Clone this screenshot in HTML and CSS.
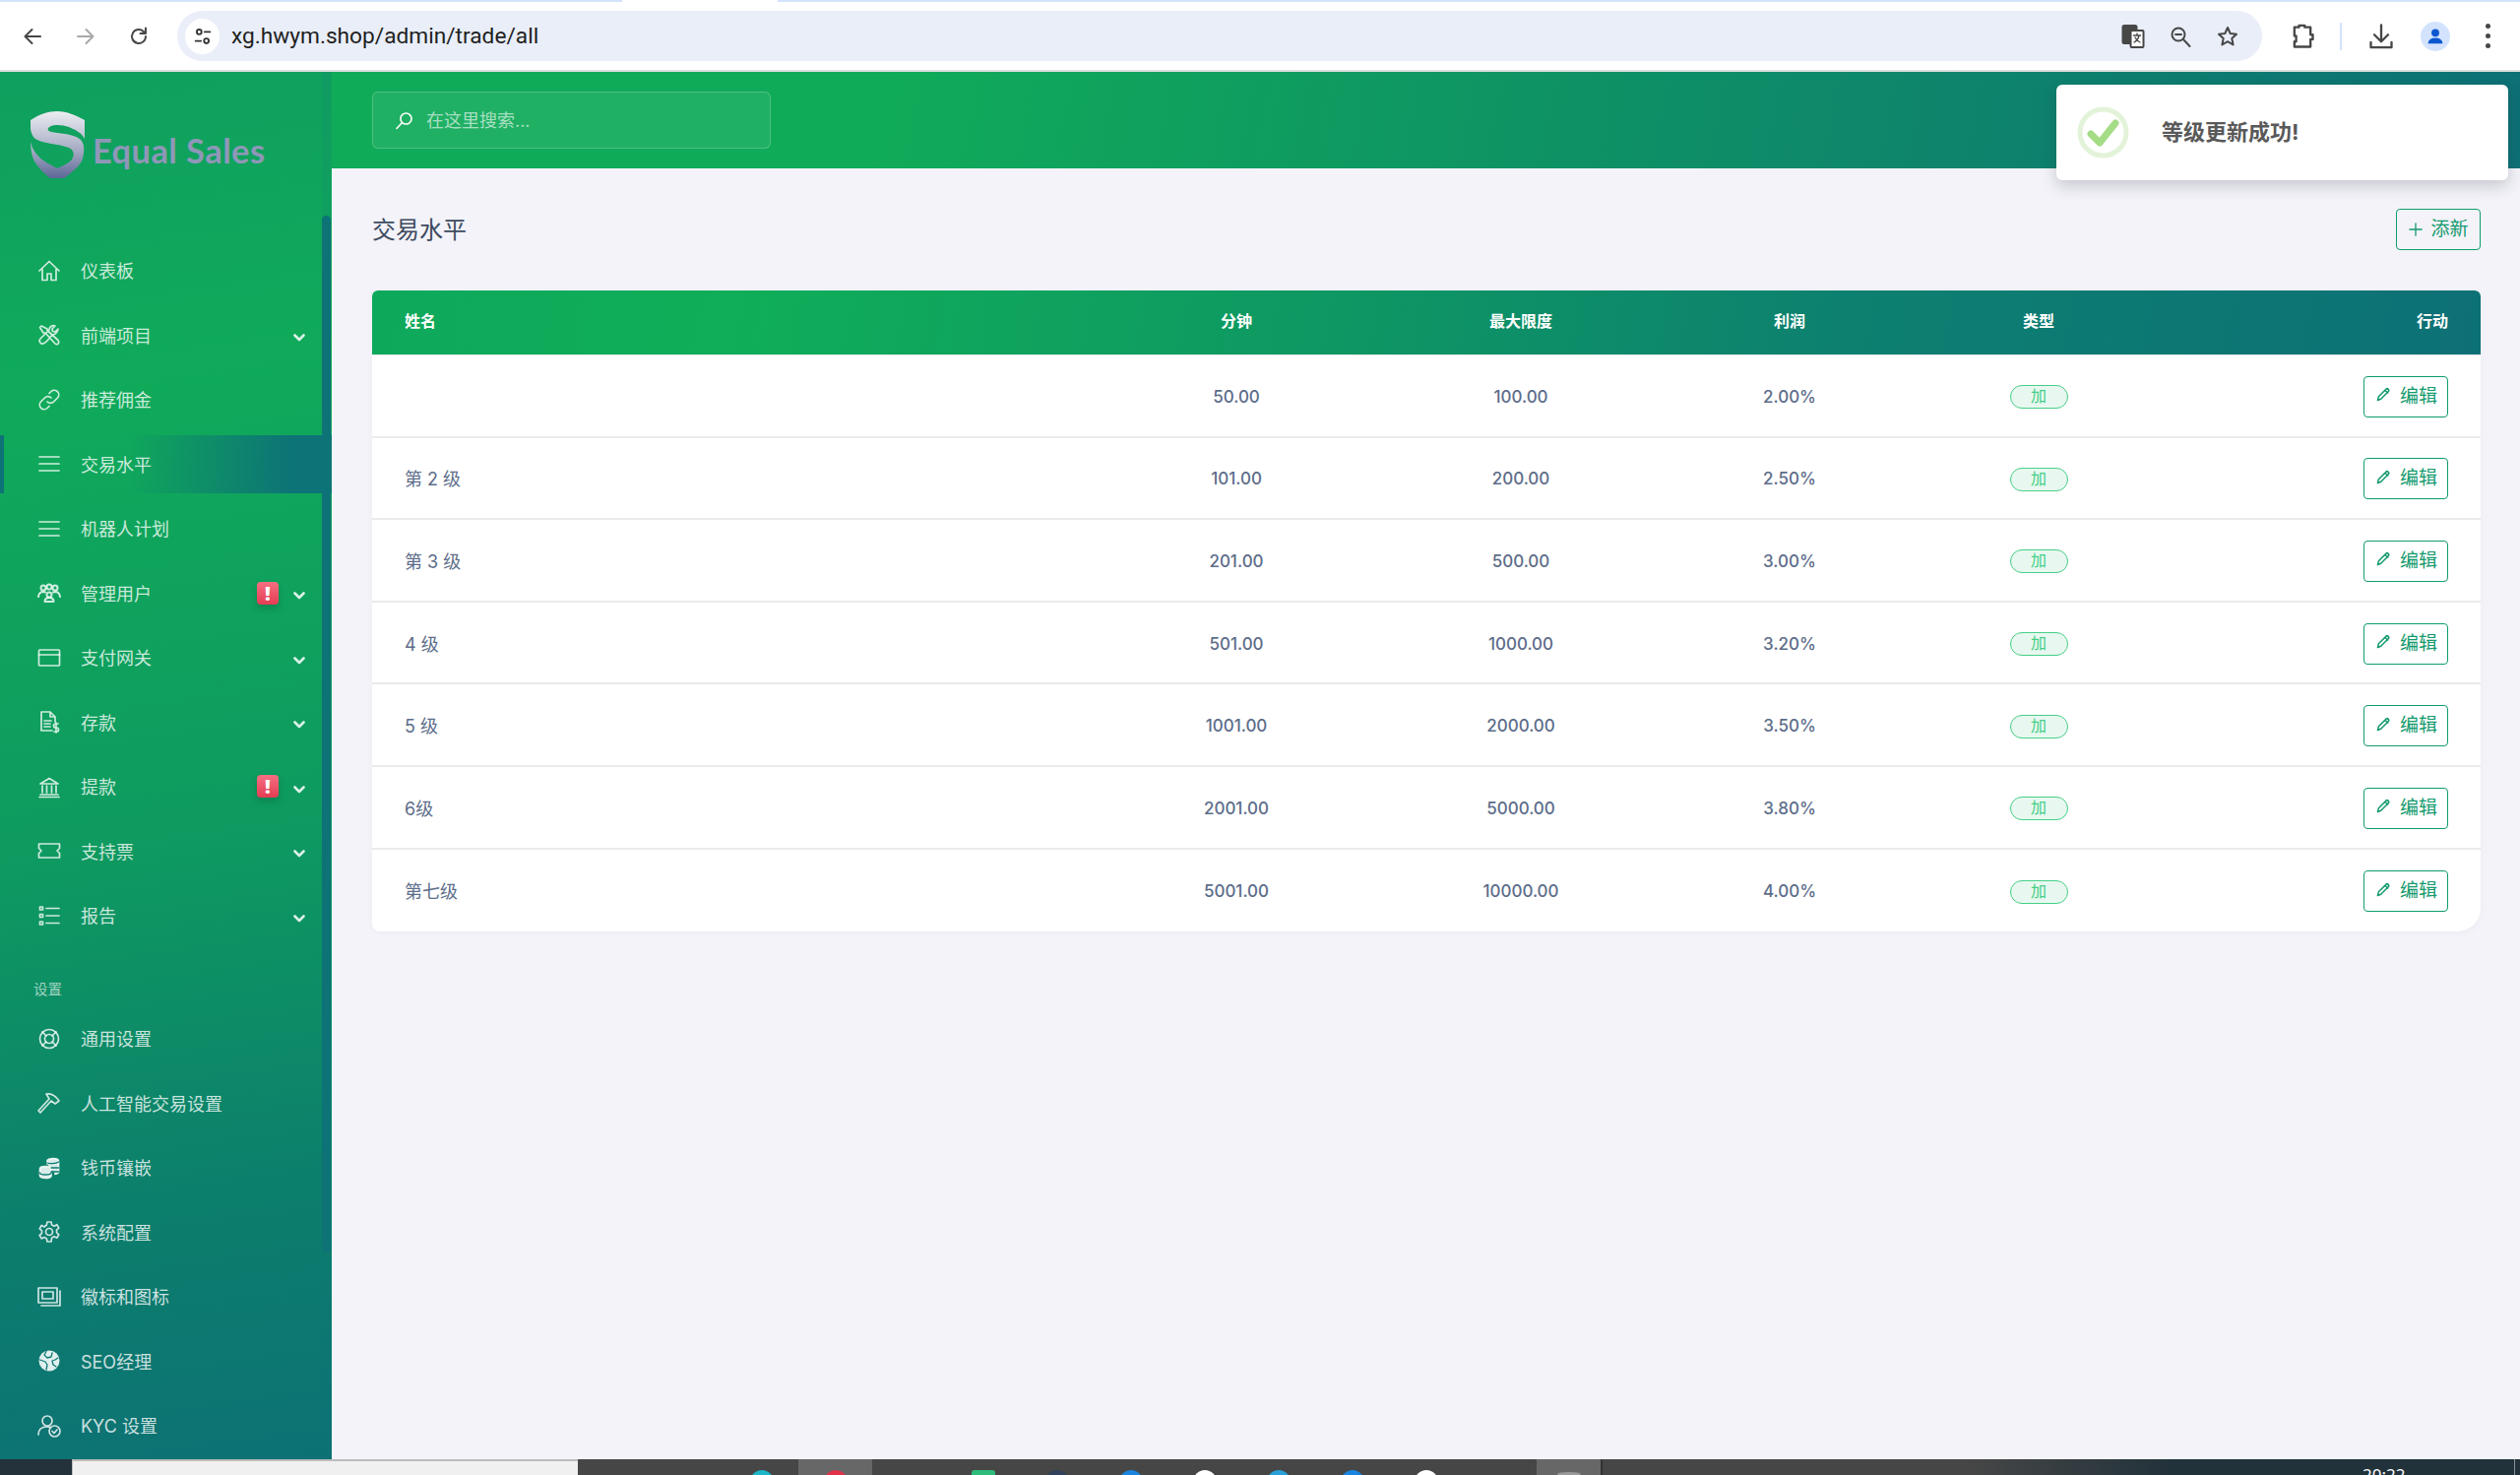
FILE: index.html
```html
<!DOCTYPE html>
<html lang="zh-CN">
<head>
<meta charset="utf-8">
<title>交易水平</title>
<link rel="stylesheet" href="styles.css">
</head>
<body>
<header class="browser">
  <div class="strip"><span class="strip-blue"></span><span class="strip-white"></span><span class="strip-rest"></span></div>
  <div class="toolbar">
    <svg class="tb-icon back" viewBox="0 0 24 24"><path d="M20 12H5M11.5 5 4.5 12l7 7"/></svg>
    <svg class="tb-icon forward" viewBox="0 0 24 24"><path d="M4 12h15M12.5 5l7 7-7 7"/></svg>
    <svg class="tb-icon reload" viewBox="0 0 24 24"><path d="M19 12a7 7 0 1 1-2.2-5.1L19 9M19 3.500V9h-5.500"/></svg>
    <div class="omnibox">
      <span class="site-chip"><svg viewBox="0 0 24 24"><circle cx="8" cy="7" r="2.600"/><path d="M14 7h6M4 17h6"/><circle cx="16" cy="17" r="2.600"/></svg></span>
      <span class="url">xg.hwym.shop/admin/trade/all</span>
      <span class="omni-icons">
        <svg class="tb-icon" viewBox="0 0 24 24"><rect class="solid" x="1.500" y="1" width="14" height="18" rx="1.500"/><rect x="9.500" y="6" width="13" height="17" rx="1" class="paper"/><path class="thin" d="M12.500 11h7M16 9v2M18 11c-.6 3-2.500 5.500-5 7M14 13c1 2 3 4 5 5"/></svg>
        <svg class="tb-icon" viewBox="0 0 24 24"><circle cx="10" cy="10" r="6.500"/><path d="M7 10h6M15 15l6.500 7"/></svg>
        <svg class="tb-icon" viewBox="0 0 24 24"><path d="m12 3 2.700 6 6.300.7-4.700 4.300 1.300 6.500L12 17.200 6.400 20.500 7.700 14 3 9.700 9.300 9z"/></svg>
      </span>
    </div>
    <svg class="tb-icon puzzle" viewBox="0 0 24 24"><path d="M9 4V2.500h5V4h5v6.500h2v4h-2V21H5v-4.500h1.500v-5H5V4z"/></svg>
    <span class="tb-sep"></span>
    <svg class="tb-icon download" viewBox="0 0 24 24"><path d="M12 2v14M6 10.500l6 6 6-6M3 17v4.500h18V17"/></svg>
    <span class="avatar"><svg viewBox="0 0 24 24"><circle cx="12" cy="8" r="4.300"/><path d="M4 20c0-4.500 3.500-6.500 8-6.500s8 2 8 6.500z"/></svg></span>
    <span class="dots"><i></i><i></i><i></i></span>
  </div>
</header>

<div class="app">
  <aside class="sidebar">
    <div class="logo">
      <svg class="logo-mark" viewBox="0 0 55 68">
        <defs>
          <linearGradient id="shield" x1="0" y1="0" x2="0" y2="1">
            <stop offset="0" stop-color="#eceef2"/>
            <stop offset=".55" stop-color="#a3a9c2"/>
            <stop offset="1" stop-color="#4f5a8e"/>
          </linearGradient>
        </defs>
        <path fill="url(#shield)" d="M0 9C9 3 18 0 27 0c10 0 19 4 28 9v19c-3-6-9-9-16-12-6-2-14-3-19-.5-3 1.500-3 4-.5 5 7 2 20 2 28 6 6 3 8 9 6 19l-1 4c-4 9-15 16-26 24C15 64 3 55 1 42c-.5-4-1-7-1-11 2 9 8 16 16 21l11 6c5-2 12-5 15-9 3-5 2-10-3-12-11-4-26-4-34-9C0 24-1 15 0 9z"/>
      </svg>
      <span class="logo-text">Equal Sales</span>
    </div>
    <nav class="menu">
      <a class="item"><svg viewBox="0 0 24 24"><path d="M2 12 12 2.500 22 12M5 10v11.500h5V15h4v6.500h5V10"/></svg><span>仪表板</span></a>
      <a class="item has-sub"><svg viewBox="0 0 24 24"><path d="M4 3 2.500 4.500 6 10l2 0 10 11c1 1 3 1 3.500-.5s.5-2-.5-3L10 7.500V6zM21 6l-3 3-2.500-.5L15 6l3-3c-3-1-6 1-6 4l-9 9c-2 2 0 6 3 5s9-9 9-9c3 0 6-3 6-6z"/></svg><span>前端项目</span><svg class="chev" viewBox="0 0 12 8"><path d="M1.500 1.500 6 6l4.500-4.500"/></svg></a>
      <a class="item"><svg viewBox="0 0 24 24"><path d="M10 14a4.500 4.500 0 0 0 6.500 0l4-4a4.600 4.600 0 0 0-6.500-6.500l-2 2M14 10a4.500 4.500 0 0 0-6.500 0l-4 4a4.600 4.600 0 0 0 6.500 6.500l2-2"/></svg><span>推荐佣金</span></a>
      <a class="item active"><svg viewBox="0 0 24 24"><path d="M2 5h20M2 12h20M2 19h20"/></svg><span>交易水平</span></a>
      <a class="item"><svg viewBox="0 0 24 24"><path d="M2 5h20M2 12h20M2 19h20"/></svg><span>机器人计划</span></a>
      <a class="item has-sub"><svg class="heavy" viewBox="0 0 24 24"><circle cx="6" cy="7" r="2.500"/><circle cx="18" cy="7" r="2.500"/><circle cx="12" cy="6" r="2.500"/><circle cx="12" cy="14" r="2.500"/><path d="M1 16c.5-3.500 2.500-5 5-5l2 .5M23 16c-.5-3.500-2.500-5-5-5l-2 .5M7.500 21c0-2.500 2-4 4.500-4s4.500 1.500 4.500 4z"/></svg><span>管理用户</span><b class="alert">!</b><svg class="chev" viewBox="0 0 12 8"><path d="M1.500 1.500 6 6l4.500-4.500"/></svg></a>
      <a class="item has-sub"><svg viewBox="0 0 24 24"><rect x="1.500" y="4" width="21" height="16" rx="1"/><path d="M1.500 9h21"/></svg><span>支付网关</span><svg class="chev" viewBox="0 0 12 8"><path d="M1.500 1.500 6 6l4.500-4.500"/></svg></a>
      <a class="item has-sub"><svg viewBox="0 0 24 24"><path d="M15 21H4V2h9l5 5v5M13 2v5h5M7 11h7M7 14h6M7 17h6M21 14h-2.500a1.500 1.500 0 0 0 0 4h1a1.500 1.500 0 0 1 0 4H17M19 13v10"/></svg><span>存款</span><svg class="chev" viewBox="0 0 12 8"><path d="M1.500 1.500 6 6l4.500-4.500"/></svg></a>
      <a class="item has-sub"><svg viewBox="0 0 24 24"><path d="M3 9 12 3.500 21 9zM5 11v7M9.500 11v7M14.500 11v7M19 11v7M3 20h18M2 22.500h20"/></svg><span>提款</span><b class="alert">!</b><svg class="chev" viewBox="0 0 12 8"><path d="M1.500 1.500 6 6l4.500-4.500"/></svg></a>
      <a class="item has-sub"><svg viewBox="0 0 24 24"><path d="M1.500 5h21v4.500l-2.500 2.500 2.500 2.500V19h-21v-4.500L4 12 1.500 9.500z"/></svg><span>支持票</span><svg class="chev" viewBox="0 0 12 8"><path d="M1.500 1.500 6 6l4.500-4.500"/></svg></a>
      <a class="item has-sub"><svg viewBox="0 0 24 24"><path d="M9 4.500h13M9 12h13M9 19.500h13M2.500 3h3v3h-3zM2.500 10.500h3v3h-3zM2.500 18h3v3h-3z"/></svg><span>报告</span><svg class="chev" viewBox="0 0 12 8"><path d="M1.500 1.500 6 6l4.500-4.500"/></svg></a>
      <div class="section">设置</div>
      <a class="item"><svg viewBox="0 0 24 24"><circle cx="12" cy="12" r="9.500"/><circle cx="12" cy="12" r="4.500"/><path d="m5 5 4 4M19 5l-4 4M5 19l4-4M19 19l-4-4"/></svg><span>通用设置</span></a>
      <a class="item"><svg viewBox="0 0 24 24"><path d="M9 3c5-1 9 1 13 7l-4 3-4-3-11 12-2-2L12 8 9 3z"/></svg><span>人工智能交易设置</span></a>
      <a class="item"><svg viewBox="0 0 24 24"><path class="soft" d="M10 8V5c0-1.500 2.500-2.500 6-2.500s5.500 1 5.500 2.500v11c0 1-1 2-3.500 2.500"/><path d="M2.500 13c0-1.500 2.500-2.500 5.500-2.500s6 1 6 2.500v7c0 1.500-3 2.500-6 2.500s-5.500-1-5.500-2.500z" class="soft"/><path class="cut" d="M10 7c2 1 9 1 11.500-1M14 12h7.500M14 16h7.500M2.500 17c0 1.500 2.500 2 5.500 2s6-.5 6-2"/></svg><span>钱币镶嵌</span></a>
      <a class="item"><svg viewBox="0 0 24 24"><circle cx="12" cy="12" r="3.500"/><path d="M10 2h4l.6 3 2.500 1.200 2.700-1.500 2 3.400-2.300 2 .1 2.800 2.200 1.900-2 3.400-2.800-1.400-2.400 1.400L14 22h-4l-.6-3.100-2.500-1.400-2.700 1.400-2-3.400 2.300-1.900v-2.800L2.200 8.900l2-3.400 2.700 1.500L9.400 5z"/></svg><span>系统配置</span></a>
      <a class="item"><svg viewBox="0 0 24 24"><rect x="1" y="3" width="19" height="15"/><rect x="5" y="7" width="11" height="7"/><path d="M23 6v15H4"/></svg><span>徽标和图标</span></a>
      <a class="item"><svg viewBox="0 0 24 24"><circle class="fill" cx="12" cy="12" r="10.500"/><path class="cut" d="M9 2.500 7 6l3 3 4-1 1-4M2.500 11 8 13l2 3-1 5M21 9l-3 2-3 1 1 4 3 2"/></svg><span>SEO经理</span></a>
      <a class="item"><svg viewBox="0 0 24 24"><circle cx="10" cy="7" r="5"/><path d="M1 21c0-5 3-8 9-8 1.500 0 2 .2 3 .5"/><circle cx="17.500" cy="17.500" r="5.500"/><path d="m15 17.500 2 2 3-3.500"/></svg><span>KYC 设置</span></a>
    </nav>
    <div class="scroll-track"><span class="scroll-thumb"></span></div>
  </aside>

  <main class="main">
    <div class="topbar">
      <label class="search">
        <svg viewBox="0 0 24 24"><circle cx="14.500" cy="9.500" r="7"/><path d="M9.500 14.500 2.500 22"/></svg>
        <span>在这里搜索...</span>
      </label>
    </div>
    <section class="content">
      <div class="page-head">
        <h1>交易水平</h1>
        <a class="btn add"><svg viewBox="0 0 16 16"><path d="M8 1v14M1 8h14"/></svg>添新</a>
      </div>
      <div class="table">
        <div class="row head"><span class="c-name">姓名</span><span>分钟</span><span>最大限度</span><span>利润</span><span>类型</span><span class="c-act">行动</span></div>
        <div class="row"><span class="c-name"></span><span>50.00</span><span>100.00</span><span>2.00%</span><span><em class="chip">加</em></span><span class="c-act"><a class="btn"><svg viewBox="0 0 16 16"><path d="M1.500 14.500 2.500 10.500 11 2c1-1 3.500 1.500 2.500 2.500L5 13zM9.500 3.500l3 3"/></svg>编辑</a></span></div>
        <div class="row"><span class="c-name">第 2 级</span><span>101.00</span><span>200.00</span><span>2.50%</span><span><em class="chip">加</em></span><span class="c-act"><a class="btn"><svg viewBox="0 0 16 16"><path d="M1.500 14.500 2.500 10.500 11 2c1-1 3.500 1.500 2.500 2.500L5 13zM9.500 3.500l3 3"/></svg>编辑</a></span></div>
        <div class="row"><span class="c-name">第 3 级</span><span>201.00</span><span>500.00</span><span>3.00%</span><span><em class="chip">加</em></span><span class="c-act"><a class="btn"><svg viewBox="0 0 16 16"><path d="M1.500 14.500 2.500 10.500 11 2c1-1 3.500 1.500 2.500 2.500L5 13zM9.500 3.500l3 3"/></svg>编辑</a></span></div>
        <div class="row"><span class="c-name">4 级</span><span>501.00</span><span>1000.00</span><span>3.20%</span><span><em class="chip">加</em></span><span class="c-act"><a class="btn"><svg viewBox="0 0 16 16"><path d="M1.500 14.500 2.500 10.500 11 2c1-1 3.500 1.500 2.500 2.500L5 13zM9.500 3.500l3 3"/></svg>编辑</a></span></div>
        <div class="row"><span class="c-name">5 级</span><span>1001.00</span><span>2000.00</span><span>3.50%</span><span><em class="chip">加</em></span><span class="c-act"><a class="btn"><svg viewBox="0 0 16 16"><path d="M1.500 14.500 2.500 10.500 11 2c1-1 3.500 1.500 2.500 2.500L5 13zM9.500 3.500l3 3"/></svg>编辑</a></span></div>
        <div class="row"><span class="c-name">6级</span><span>2001.00</span><span>5000.00</span><span>3.80%</span><span><em class="chip">加</em></span><span class="c-act"><a class="btn"><svg viewBox="0 0 16 16"><path d="M1.500 14.500 2.500 10.500 11 2c1-1 3.500 1.500 2.500 2.500L5 13zM9.500 3.500l3 3"/></svg>编辑</a></span></div>
        <div class="row last"><span class="c-name">第七级</span><span>5001.00</span><span>10000.00</span><span>4.00%</span><span><em class="chip">加</em></span><span class="c-act"><a class="btn"><svg viewBox="0 0 16 16"><path d="M1.500 14.500 2.500 10.500 11 2c1-1 3.500 1.500 2.500 2.500L5 13zM9.500 3.500l3 3"/></svg>编辑</a></span></div>
      </div>
    </section>
  </main>
</div>

<footer class="taskbar">
  <span class="tk-start"></span>
  <span class="tk-search"></span>
  <div class="tk-apps">
    <span class="tk-cell"><i class="dot teal"></i></span>
    <span class="tk-cell on"><i class="dot red"></i></span>
    <span class="tk-cell"></span>
    <span class="tk-cell"><i class="dot green"></i></span>
    <span class="tk-cell"><i class="dot navy"></i></span>
    <span class="tk-cell"><i class="dot blue"></i></span>
    <span class="tk-cell"><i class="dot white"></i></span>
    <span class="tk-cell"><i class="dot sky"></i></span>
    <span class="tk-cell"><i class="dot blue"></i></span>
    <span class="tk-cell"><i class="dot white"></i></span>
    <span class="tk-cell"></span>
    <span class="tk-cell on end"><i class="dot grey"></i></span>
  </div>
  <span class="tk-fill"></span>
  <time class="tk-time">20:22</time>
  <span class="tk-edge"></span>
</footer>

<div class="toast">
  <svg class="toast-icon" viewBox="0 0 53 53"><circle cx="26.500" cy="26.500" r="23.500"/><path d="m14 28 9 9 16-20"/></svg>
  <strong>等级更新成功!</strong>
</div>
</body>
</html>
```

FILE: styles.css
```css
* { box-sizing: border-box; }
html, body { margin: 0; height: 100%; }
body {
  width: 2560px;
  height: 1498px;
  display: flex;
  flex-direction: column;
  overflow: hidden;
  position: relative;
  background: #f3f3f9;
  font-family: Inter, "Noto Sans CJK SC", sans-serif;
  font-size: 18px;
}
svg { display: block; fill: none; stroke: currentColor; stroke-linecap: round; stroke-linejoin: round; }
a { text-decoration: none; color: inherit; }

/* browser chrome */
.browser { flex: 0 0 73px; background: #fff; border-bottom: 2px solid #dedede; display: flex; flex-direction: column; }
.strip { display: flex; height: 2px; flex: none; }
.strip-blue { width: 632px; background: #d3e3fd; }
.strip-white { width: 158px; background: #fff; }
.strip-rest { flex: 1; background: #d3e3fd; }
.toolbar { flex: 1; display: flex; align-items: center; padding-left: 21px; }
.tb-icon { width: 24px; height: 24px; color: #474747; stroke-width: 2; flex: none; }
.forward { margin-left: 30px; color: #a8a8a8; }
.reload { margin-left: 30px; }
.omnibox { margin-left: 27px; width: 2118px; height: 51px; border-radius: 26px; background: #e9eef8; display: flex; align-items: center; padding-left: 8px; }
.site-chip { width: 35px; height: 36px; border-radius: 50%; background: #fff; display: flex; align-items: center; justify-content: center; color: #333; }
.site-chip svg { width: 22px; height: 22px; stroke-width: 2; }
.url { margin-left: 12px; font-family: Roboto, sans-serif; font-size: 22.700px; color: #1f1f1f; }
.omni-icons { margin-left: auto; display: flex; gap: 24px; padding-right: 23px; }
.omni-icons .solid { fill: #474747; }
.omni-icons .paper { fill: #fff; }
.omni-icons .thin { stroke-width: 1.300; }
.puzzle { margin-left: 27px; width: 28px; height: 28px; }
.tb-sep { width: 2px; height: 28px; background: #d3e3fd; margin-left: 24px; }
.download { margin-left: 26px; width: 28px; height: 28px; }
.avatar { width: 30px; height: 30px; border-radius: 50%; background: #d3e3fd; color: #0b57d0; margin-left: 26px; display: flex; align-items: center; justify-content: center; }
.avatar svg { width: 22px; height: 22px; fill: #0b57d0; stroke: none; }
.dots { display: flex; flex-direction: column; gap: 5px; margin-left: 36px; }
.dots i { width: 5px; height: 5px; border-radius: 50%; background: #474747; }

/* layout */
.app { flex: 1; display: flex; min-height: 0; }
.sidebar {
  flex: 0 0 337px;
  position: relative;
  overflow: hidden;
  color: rgba(255, 255, 255, .78);
  background: linear-gradient(172deg, #0f9f5f 0, #10aa5a 22%, #0e9a60 55%, #0c7f6c 80%, #0d7174 100%);
}
.logo { height: 172px; padding: 40px 0 0 31px; display: flex; align-items: flex-start; }
.logo-mark { width: 55px; height: 68px; stroke: none; flex: none; }
.logo-text { margin: 18px 0 0 8px; font-family: Lato, sans-serif; font-size: 34.500px; font-weight: 700; line-height: 44px; color: #8f97b8; letter-spacing: .4px; white-space: nowrap; }
.menu { display: flex; flex-direction: column; gap: 6.500px; }
.item { height: 59px; display: flex; align-items: center; padding: 0 27px 0 38px; font-size: 18px; position: relative; }
.item > span { margin-top: -1px; }
.item > svg:first-child { width: 24px; height: 24px; stroke-width: 1.700; margin-right: 20px; flex: none; color: rgba(255, 255, 255, .8); }
.item svg.heavy { stroke-width: 2; }
.item svg .fill { fill: rgba(255, 255, 255, .88); stroke: none; }
.item svg .soft { fill: rgba(255, 255, 255, .85); stroke: rgba(255, 255, 255, .85); }
.item svg .cut { stroke: #0d7a74; stroke-width: 1.300; }
.item.active { border-left: 4px solid #0d7376; padding-left: 34px; background: linear-gradient(90deg, transparent 38%, #0d7376 88%); }
.chev { width: 12px; height: 8px; stroke-width: 2.600; margin-left: auto; margin-top: 6px; color: rgba(255, 255, 255, .85); flex: none; }
.alert + .chev { margin-left: 15px; }
.alert { margin-left: auto; width: 22px; height: 23px; border-radius: 4px; background: linear-gradient(180deg, #f46f82, #e53c53); color: #fff; font: 800 20px/23px "Open Sans", sans-serif; text-align: center; box-shadow: 0 4px 6px rgba(0, 60, 50, .25); }
.section { height: 53px; padding-top: 27px; line-height: 24px; font-size: 14.500px; padding-left: 34px; color: rgba(255, 255, 255, .6); }
.scroll-track { position: absolute; top: 0; bottom: 0; right: 1px; width: 9px; background: rgba(13, 112, 120, .12); }
.scroll-thumb { position: absolute; top: 146px; height: 1053px; left: 0; width: 9px; border-radius: 5px; background: #0d7376; }

.main { flex: 1; display: flex; flex-direction: column; min-width: 0; }
.topbar { flex: 0 0 98px; padding: 20px 0 0 41px; background: linear-gradient(100deg, #10ab59 0, #10ab59 25%, #0e8f66 60%, #0d7076 100%); }
.search { width: 405px; height: 58px; border-radius: 6px; border: 1px solid rgba(255, 255, 255, .2); background: rgba(255, 255, 255, .07); display: flex; align-items: center; padding-left: 22px; color: rgba(255, 255, 255, .62); }
.search svg { width: 19px; height: 19px; stroke-width: 2; margin-right: 13px; color: #fff; }
.search span { margin-top: -3px; }
.content { flex: 1; padding: 41px 40px 0 41px; }
.page-head { display: flex; justify-content: space-between; align-items: center; height: 42px; margin-bottom: 41px; }
h1 { margin: -3px 0 0; font-size: 24px; font-weight: 400; color: #3e4a5f; }

.btn { display: inline-flex; align-items: center; height: 42px; padding: 0 10px 0 12px; border: 1.500px solid #0f9d6a; border-radius: 4px; font-size: 19px; font-weight: 400; color: #149a6e; background: #fff; line-height: 36px; }
.btn svg { width: 15px; height: 15px; stroke-width: 1.600; margin-right: 9px; margin-top: -4px; }
.btn.add { background: transparent; width: 86.500px; }
.btn.add svg { width: 14px; height: 14px; stroke-width: 1.500; margin-right: 9px; margin-top: 0; }

.table { border-radius: 6px 6px 24px 8px; overflow: hidden; background: #fff; box-shadow: 0 2px 8px rgba(30, 32, 60, .03); color: #5d6d8a; }
.row { display: grid; grid-template-columns: 744px 268px 310px 236px 270px 314px; align-items: center; height: 83.600px; padding-top: 2px; border-bottom: 2px solid #e9ebec; text-align: center; font-size: 17px; font-weight: 500; }
.row.last { border-bottom: 0; }
.row.head { height: 66px; padding: 0 0 5px; border-bottom: 1px solid #e9ebec; color: #fff; font-size: 16px; font-weight: 700; background: linear-gradient(100deg, #0ea85b 0, #10ae59 17%, #0e9763 46%, #0d8070 70%, #0d7076 100%); }
.c-name { text-align: left; padding-left: 33px; font-weight: 400; font-size: 18px; margin-top: -2px; }
.head .c-name { font-weight: 700; font-size: 16px; margin-top: 0; }
.c-act { text-align: right; padding-right: 33px; }
.chip { display: inline-block; width: 59px; height: 24px; line-height: 21px; border-radius: 12px; border: 1.500px solid #45cf87; background: #e8f8f0; color: #45cf87; font-size: 16px; font-style: normal; font-weight: 400; vertical-align: middle; margin-top: 1px; }

/* taskbar */
.taskbar { flex: 0 0 16px; display: flex; overflow: hidden; position: relative; background: #464646; }
.tk-start { width: 73px; background: #24323b; }
.tk-search { width: 514px; background: #f0f0f0; border-top: 2px solid #bcbcbc; border-left: 1px solid #bcbcbc; }
.tk-apps { display: flex; margin-left: 149px; width: 892px; }
.tk-cell { width: 75px; flex: none; display: flex; justify-content: center; padding-top: 11px; }
.tk-cell.on { background: #676767; }
.tk-cell.end { width: 67px; border-right: 2px solid #333; }
.dot { width: 24px; height: 24px; border-radius: 50%; }
.teal { background: #1eb6c9; }
.red { background: #e0334a; }
.green { background: #2fbc7b; border-radius: 3px; }
.navy { background: #33415c; }
.blue { background: #1a84e0; }
.white { background: #fff; }
.sky { background: #2aa0d8; }
.grey { background: #9a9a9a; height: 4px; margin-top: 2px; }
.tk-fill { flex: 1; background: linear-gradient(90deg, #464646 0, #464646 40%, #22323b 62%, #22323b 100%); }
.tk-time { position: absolute; left: 2400px; top: 6px; color: #fff; font-family: "Noto Sans", sans-serif; font-size: 17px; line-height: 20px; }
.tk-edge { position: absolute; right: 5px; top: 0; bottom: 0; width: 1px; background: #8c9498; }

/* toast */
.toast { position: absolute; left: 2089px; top: 86px; width: 459px; height: 97px; border-radius: 6px; background: #fff; box-shadow: 0 6px 16px rgba(40, 40, 60, .22); display: flex; align-items: center; padding-left: 21px; }
.toast-icon { width: 53px; height: 53px; margin-right: 33px; }
.toast-icon circle { stroke: #e3f3da; stroke-width: 5; }
.toast-icon path { stroke: #a5dc86; stroke-width: 7; }
.toast strong { font-size: 22px; font-weight: 700; color: #595959; margin-top: -6px; }
```
